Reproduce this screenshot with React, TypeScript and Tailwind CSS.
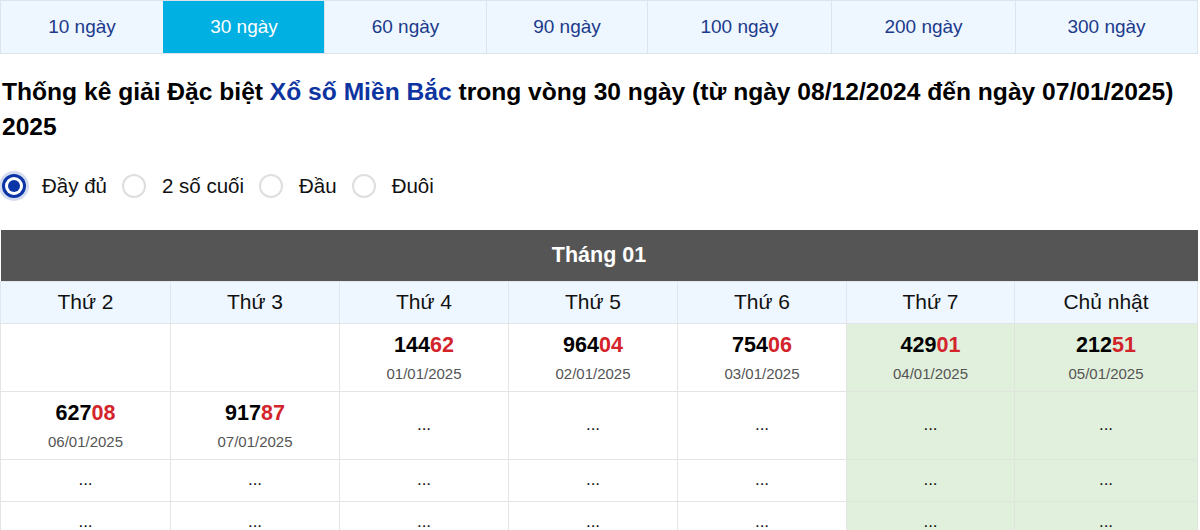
import { useState } from 'react'

const tabs = ['10 ngày', '30 ngày', '60 ngày', '90 ngày', '100 ngày', '200 ngày', '300 ngày']
const days = ['Thứ 2', 'Thứ 3', 'Thứ 4', 'Thứ 5', 'Thứ 6', 'Thứ 7', 'Chủ nhật']
const modes = ['Đầy đủ', '2 số cuối', 'Đầu', 'Đuôi']

type Cell = { num: string; date: string } | 'empty' | 'dots'

const rows: { cells: Cell[]; tall: boolean }[] = [
  {
    tall: true,
    cells: [
      'empty',
      'empty',
      { num: '14462', date: '01/01/2025' },
      { num: '96404', date: '02/01/2025' },
      { num: '75406', date: '03/01/2025' },
      { num: '42901', date: '04/01/2025' },
      { num: '21251', date: '05/01/2025' },
    ],
  },
  {
    tall: true,
    cells: [
      { num: '62708', date: '06/01/2025' },
      { num: '91787', date: '07/01/2025' },
      'dots',
      'dots',
      'dots',
      'dots',
      'dots',
    ],
  },
  { tall: false, cells: ['dots', 'dots', 'dots', 'dots', 'dots', 'dots', 'dots'] },
  { tall: false, cells: ['dots', 'dots', 'dots', 'dots', 'dots', 'dots', 'dots'] },
]

function Radio({ checked }: { checked: boolean }) {
  return checked ? (
    <span className="flex h-[24px] w-[24px] shrink-0 items-center justify-center rounded-full bg-[#0b35a6] shadow-[0_0_0_3px_rgba(11,53,166,0.18)]">
      <span className="flex h-[18px] w-[18px] items-center justify-center rounded-full bg-white">
        <span className="h-[12px] w-[12px] rounded-full bg-[#0b35a6]" />
      </span>
    </span>
  ) : (
    <span className="h-[24px] w-[24px] shrink-0 rounded-full border-2 border-[#dedede] bg-white" />
  )
}

export default function App() {
  const [tab, setTab] = useState(1)
  const [mode, setMode] = useState(0)

  return (
    <div className="w-[1200px] bg-white font-['Liberation_Sans',Arial,sans-serif] text-black">
      {/* Khoảng thời gian */}
      <div className="grid h-[54px] w-[1198px] grid-cols-[162px_161px_162px_161px_184px_184px_1fr] border border-[#dde3ea]">
        {tabs.map((t, i) => (
          <button
            key={t}
            type="button"
            onClick={() => setTab(i)}
            className={
              i === tab
                ? 'flex items-center justify-center border-l border-[#00b0e2] bg-[#00b0e2] text-[19px] text-white'
                : 'flex items-center justify-center border-l border-[#dde3ea] bg-[#eef7ff] text-[19px] text-[#1c3a8b] first:border-l-0'
            }
          >
            {t}
          </button>
        ))}
      </div>

      <h2 className="mt-[20px] pl-[2px] text-[24.6px] font-bold leading-[35px]">
        Thống kê giải Đặc biệt <span className="text-[#0d34a0]">Xổ số Miền Bắc</span> trong vòng 30 ngày (từ ngày
        08/12/2024 đến ngày 07/01/2025) 2025
      </h2>

      <div className="mt-[30px] flex h-[24px] items-center pl-[2px] text-[20.5px] text-[#111]">
        {modes.map((m, i) => (
          <label key={m} className="mr-[15px] flex cursor-pointer items-center gap-[16px]" onClick={() => setMode(i)}>
            <Radio checked={mode === i} />
            <span>{m}</span>
          </label>
        ))}
      </div>

      <table className="mt-[32px] w-[1198px] table-fixed border-collapse">
        <colgroup>
          <col className="w-[170px]" />
          <col className="w-[169px]" />
          <col className="w-[169px]" />
          <col className="w-[169px]" />
          <col className="w-[169px]" />
          <col className="w-[168px]" />
          <col />
        </colgroup>
        <thead>
          <tr>
            <th colSpan={7} className="h-[51px] bg-[#555555] text-center text-[21.5px] font-bold text-white">
              Tháng 01
            </th>
          </tr>
          <tr>
            {days.map((d) => (
              <th
                key={d}
                className="h-[42px] border border-[#e2e6ea] bg-[#eef7ff] text-center text-[21px] font-normal text-[#111]"
              >
                {d}
              </th>
            ))}
          </tr>
        </thead>
        <tbody>
          {rows.map((r, ri) => (
            <tr key={ri} className={r.tall ? 'h-[68px]' : 'h-[42px]'}>
              {r.cells.map((c, ci) => (
                <td
                  key={ci}
                  className={
                    ci >= 5
                      ? 'border border-[#dfe5dc] bg-[#e1f0dc] p-0 text-center align-middle'
                      : 'border border-[#e4e4e4] bg-white p-0 text-center align-middle'
                  }
                >
                  {c === 'empty' ? null : c === 'dots' ? (
                    <span className="text-[17px] text-[#111]">...</span>
                  ) : (
                    <div className="flex flex-col items-center">
                      <span className="text-[21.5px] font-bold leading-[26px]">
                        {c.num.slice(0, 3)}
                        <span className="text-[#d3242c]">{c.num.slice(3)}</span>
                      </span>
                      <span className="mt-[7px] text-[15px] leading-[18px] text-[#555]">{c.date}</span>
                    </div>
                  )}
                </td>
              ))}
            </tr>
          ))}
        </tbody>
      </table>
    </div>
  )
}
